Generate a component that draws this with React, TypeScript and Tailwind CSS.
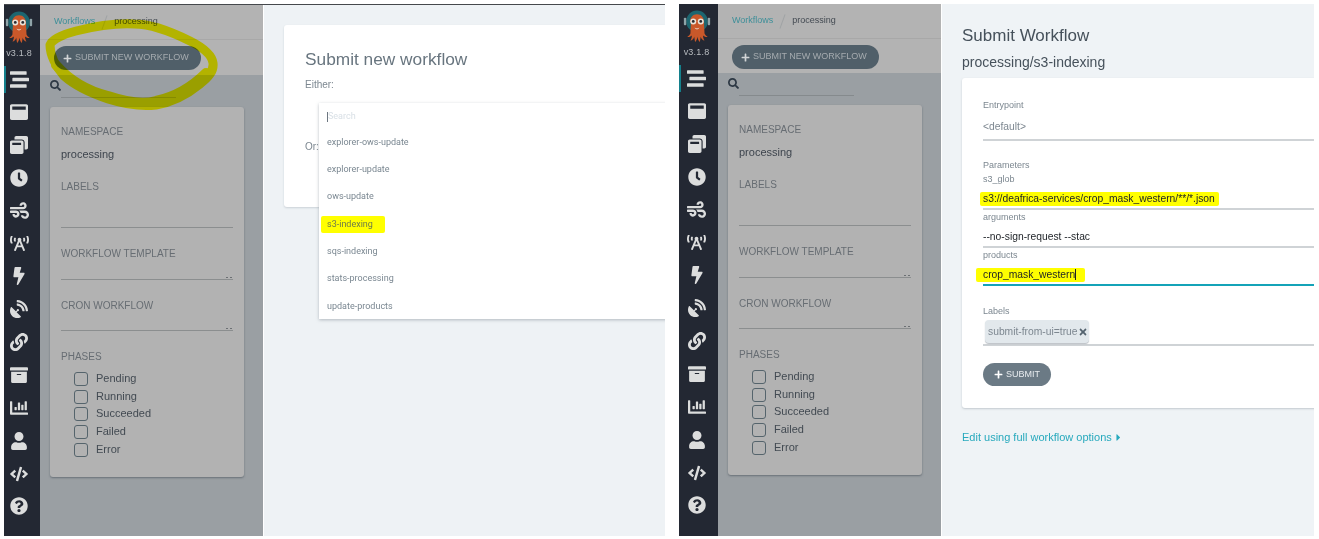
import type { ReactNode } from "react";
import {
  FaArchive,
  FaBolt,
  FaBroadcastTower,
  FaCaretRight,
  FaChartBar,
  FaClock,
  FaCode,
  FaLink,
  FaPlus,
  FaQuestionCircle,
  FaSatelliteDish,
  FaSearch,
  FaStream,
  FaTimes,
  FaUser,
  FaWind,
  FaWindowMaximize,
  FaWindowRestore,
} from "react-icons/fa";

const navIcons = [
  FaStream,
  FaWindowMaximize,
  FaWindowRestore,
  FaClock,
  FaWind,
  FaBroadcastTower,
  FaBolt,
  FaSatelliteDish,
  FaLink,
  FaArchive,
  FaChartBar,
  FaUser,
  FaCode,
  FaQuestionCircle,
];

const phases = ["Pending", "Running", "Succeeded", "Failed", "Error"];

const templates = [
  "explorer-ows-update",
  "explorer-update",
  "ows-update",
  "s3-indexing",
  "sqs-indexing",
  "stats-processing",
  "update-products",
];

const Logo = () => (
  <svg width="30" height="34" viewBox="0 0 32 36" className="block">
    <circle cx="16" cy="12" r="11.5" fill="#1d6670" />
    <rect x="2" y="8" width="2.5" height="8" rx="1" fill="#8fa3a8" />
    <rect x="27.5" y="8" width="2.5" height="8" rx="1" fill="#8fa3a8" />
    <path
      d="M8.5 13c0-5 3-8.5 7.5-8.5s7.5 3.500 7.500 8.500c0 5 .5 9 .5 12 1 2 2.500 3 3.500 3.500-2 .5-4-.5-5-1.500 0 2 .5 4 1.500 5.500-2 0-3.500-2-4-4-.5 2-.5 4-1 5.500-1.500-1-2-3-2.500-5.500-.5 2.500-1 4.500-2.500 5.500-.5-1.500-.5-3.500-1-5.500-.5 2-2 4-4 4 1-1.500 1.500-3.500 1.500-5.500-1 1-3 2-5 1.500 1-.5 2.500-1.500 3.500-3.500 0-3 .5-7 .5-12z"
      fill="#c9582a"
    />
    <circle cx="12" cy="12" r="3.200" fill="#e9e4da" />
    <circle cx="20" cy="12" r="3.200" fill="#e9e4da" />
    <circle cx="12" cy="12" r="1.500" fill="#2a2a30" />
    <circle cx="20" cy="12" r="1.500" fill="#2a2a30" />
    <path d="M13.500 18.500c1.500 1.500 3.500 1.500 5 0-.5 2.500-4.500 2.500-5 0z" fill="#f3e6da" />
  </svg>
);

const Sidebar = ({ width }: { width: string }) => (
  <div className={`${width} h-full shrink-0 bg-[#232833] flex flex-col items-center relative`}>
    <div className="h-[58px] flex flex-col items-center pt-[6px]">
      <Logo />
      <span className="text-[9px] tracking-[0.2px] leading-[12px] mt-[2px] text-[#b8bcc0]">v3.1.8</span>
    </div>
    {navIcons.map((Icon, i) => (
      <div key={i} className="h-[32.850px] w-full flex items-center justify-center relative">
        {i === 0 && <div className="absolute left-0 top-[3px] bottom-[3px] w-[2px] bg-[#14808c]" />}
        <Icon className="text-[#dcdddd]" size={i === 0 || i === 5 || i === 4 ? 19 : 18} />
      </div>
    ))}
  </div>
);

const FilterLabel = ({ children, className }: { children: ReactNode; className: string }) => (
  <div className={`text-[10px] leading-[12px] text-[#676d73] ${className}`}>{children}</div>
);

const SelectLine = ({ height }: { height: string }) => (
  <div className={`${height} border-b border-[#8b8e8f] flex justify-end items-end gap-[2px] pr-[1px]`}>
    <span className="w-[2px] h-[1px] mb-[1px] bg-[#6c7074]" />
    <span className="w-[2px] h-[1px] mb-[1px] bg-[#6c7074]" />
  </div>
);

const FilterPanel = ({ headerHeight }: { headerHeight: string }) => (
  <div className="w-[223px] h-full shrink-0 bg-[#9a9fa3] flex flex-col">
    <div className={`${headerHeight} bg-[#b3b3b3] shrink-0`}>
      <div className="h-[35px] border-b border-[#a8a8a8] pl-[14px] flex items-center text-[9px]">
        <span className="text-[#3e8f99]">Workflows</span>
        <span className="mx-[9px] w-[1px] h-[15px] rotate-[20deg] bg-[#a0a3a5]" />
        <span className="text-[#434a52]">processing</span>
      </div>
      <div className="pl-[14px] pt-[6px]">
        <div className="w-[147px] h-[24px] rounded-full bg-[#505f69] flex items-center pl-[9px] gap-[3px] text-[9px] text-[#a5abaf]">
          <FaPlus size={9} className="text-[#d2d5d7]" />
          <span>SUBMIT NEW WORKFLOW</span>
        </div>
      </div>
    </div>
    <div className="h-[32px] pl-[10px] shrink-0 flex">
      <FaSearch size={11} className="mt-[5px] text-[#2d3844]" />
      <div className="ml-[0px] w-[115px] h-[23px] border-b border-[#858a8d]" />
    </div>
    <div className="ml-[10px] w-[194px] bg-[#b2b2b2] rounded-[3px] shadow-[0_1px_2px_rgba(70,80,90,0.6)] pl-[11px] pr-[11px] pt-[19px] pb-[18px]">
      <FilterLabel className="">NAMESPACE</FilterLabel>
      <div className="text-[11px] leading-[14px] mt-[9px] text-[#3d444d]">processing</div>
      <FilterLabel className="mt-[20px]">LABELS</FilterLabel>
      <div className="h-[35px] border-b border-[#8b8e8f]" />
      <FilterLabel className="mt-[20px]">WORKFLOW TEMPLATE</FilterLabel>
      <SelectLine height="h-[20px]" />
      <FilterLabel className="mt-[20px]">CRON WORKFLOW</FilterLabel>
      <SelectLine height="h-[19px]" />
      <FilterLabel className="mt-[20px]">PHASES</FilterLabel>
      <div className="mt-[7px] ml-[13px] flex flex-col">
        {phases.map((p) => (
          <div key={p} className="h-[17.800px] flex items-center">
            <span className="w-[14px] h-[14px] rounded-[3px] border-[1.500px] border-[#55646c]" />
            <span className="ml-[8px] -mt-[2px] text-[11px] leading-[14px] text-[#424a52]">{p}</span>
          </div>
        ))}
      </div>
    </div>
  </div>
);

const Field = ({
  label,
  value,
  height,
  active,
  dark,
  className = "",
}: {
  label: string;
  value: ReactNode;
  height: string;
  active?: boolean;
  dark?: boolean;
  className?: string;
}) => (
  <div className={className}>
    <div className="text-[9px] leading-[14px] text-[#7c8790]">{label}</div>
    <div
      className={`${height} pt-[3px] flex items-center text-[10.300px] ${dark ? "text-[#1c2025]" : "text-[#7d8790]"} ${
        active ? "border-b-2 border-[#14a3b8]" : "border-b-2 border-[#cfd3d6]"
      }`}
    >
      {value}
    </div>
  </div>
);

const Marked = ({ children, className }: { children: ReactNode; className: string }) => (
  <span className={`bg-[#ffff00] rounded-[2px] ${className}`}>{children}</span>
);

export default function App() {
  return (
    <div className="w-[1319px] h-[539px] bg-white overflow-hidden flex font-['Liberation_Sans',Arial,sans-serif]">
      {/* first capture: template picker */}
      <div className="ml-[4px] mt-[4px] w-[661px] h-[532px] border-t border-[#45484c] flex relative overflow-hidden">
        <div className="w-[36px] h-full shrink-0 bg-[#232833] pr-[6px]">
          <Sidebar width="w-[30px]" />
        </div>
        <FilterPanel headerHeight="h-[70px]" />
        <div className="ml-[1px] flex-1 bg-[#eef2f5] pl-[20px] pt-[20px] overflow-hidden">
          <div className="w-[400px] h-[182px] bg-white rounded-[3px] shadow-[0_1px_2px_rgba(150,160,170,0.4)] pl-[21px] pt-[23px]">
            <div className="text-[17.300px] leading-[22px] text-[#68757f]">Submit new workflow</div>
            <div className="mt-[8px] text-[10px] leading-[14px] text-[#7c8790]">Either:</div>
            <div className="mt-[48px] text-[10px] leading-[14px] text-[#7c8790]">Or:</div>
          </div>
        </div>

        {/* template dropdown, laid over the card */}
        <div className="absolute left-[315px] top-[98px] w-[360px] h-[216px] bg-white shadow-[0_1px_3px_rgba(120,130,140,0.5)] pl-[8px] pt-[1px] font-['Roboto',sans-serif] text-[9px] text-[#7a8791]">
          <div className="h-[25px] flex items-center text-[#d9e0e6]">
            <span className="w-[1px] h-[10px] bg-[#6c7680]" />
            Search
          </div>
          <div>
            {templates.map((t) => (
              <div key={t} className="h-[27.300px] flex items-center">
                {t === "s3-indexing" ? (
                  <Marked className="-ml-[6px] pl-[6px] pr-[12px] h-[17px] flex items-center text-[#6d7a4a]">{t}</Marked>
                ) : (
                  t
                )}
              </div>
            ))}
          </div>
        </div>

        {/* marker scribble round the submit button */}
        <svg
          className="absolute left-0 top-0 mix-blend-multiply pointer-events-none"
          width="240"
          height="120"
          viewBox="0 0 240 120"
        >
          <path
            d="M46 40C48 34 60 29 72 26C88 22 110 18 130 19C150 19 170 28 186 36C198 42 208 50 209 58C210 66 205 72 196 79C185 88 170 97 152 100C136 102 120 99 104 94C86 88 70 80 60 71C52 62 46 50 46 40Z"
            fill="none"
            stroke="#ffff00"
            strokeWidth="9"
            strokeLinejoin="round"
          />
          <path
            d="M52 60C66 76 84 86 104 91C122 97 138 100 152 96C170 92 186 84 202 68"
            fill="none"
            stroke="#ffff00"
            strokeWidth="10"
            strokeLinecap="round"
          />
        </svg>
      </div>

      {/* second capture: submit form */}
      <div className="ml-[14px] mt-[4px] w-[635px] h-[532px] flex overflow-hidden">
        <div className="w-[39px] h-full shrink-0 bg-[#232833] pr-[4px]">
          <Sidebar width="w-[35px]" />
        </div>
        <FilterPanel headerHeight="h-[69px]" />
        <div className="flex-1 ml-[1px] bg-[#eff3f6] pl-[20px] overflow-hidden">
          <div className="mt-[22px] text-[17px] leading-[20px] text-[#46515b]">Submit Workflow</div>
          <div className="mt-[7px] text-[14px] leading-[18px] text-[#46515b]">processing/s3-indexing</div>
          <div className="mt-[7px] w-[380px] h-[330px] bg-white rounded-[3px] shadow-[0_1px_2px_rgba(150,160,170,0.5)] pl-[21px] pt-[20px]">
            <Field label="Entrypoint" value="<default>" height="h-[29px]" />
            <div className="mt-[18px] text-[9px] leading-[12px] text-[#7c8790]">Parameters</div>
            <Field
              className="mt-[1px]"
              label="s3_glob"
              height="h-[24px]"
              dark
              value={<Marked className="-ml-[3px] pl-[3px] pr-[4px] h-[14px] flex items-center">s3://deafrica-services/crop_mask_western/**/*.json</Marked>}
            />
            <Field label="arguments" height="h-[24px]" dark value="--no-sign-request --stac" />
            <Field
              label="products"
              height="h-[24px]"
              dark
              active
              value={
                <Marked className="-ml-[7px] pl-[7px] pr-[9px] h-[14px] flex items-center">
                  crop_mask_western
                  <span className="w-[1px] h-[11px] bg-[#1c2025]" />
                </Marked>
              }
            />
            <div className="mt-[19px] text-[9px] leading-[12px] text-[#7c8790]">Labels</div>
            <div className="h-[29px] border-b-2 border-[#cfd3d6] pl-[2px] pt-[3px]">
              <div className="w-[104px] h-[23px] rounded-[4px] bg-[#e2e8ec] shadow-[0_1px_1px_rgba(120,130,140,0.5)] flex items-center justify-between pl-[3px] pr-[1px] text-[10.300px] text-[#7d8790] whitespace-nowrap">
                <span>submit-from-ui=true</span>
                <FaTimes size={10} className="shrink-0 text-[#54636f]" />
              </div>
            </div>
            <div className="mt-[17px] w-[68px] h-[23px] rounded-full bg-[#6b7a85] flex items-center justify-center gap-[3px] text-[9px] text-[#e8ecef]">
              <FaPlus size={9} className="text-white" />
              <span>SUBMIT</span>
            </div>
          </div>
          <div className="mt-[22px] flex items-center text-[11px] leading-[14px] text-[#27a9bd]">
            Edit using full workflow options
            <FaCaretRight size={11} className="ml-[1px]" />
          </div>
        </div>
      </div>
    </div>
  );
}
